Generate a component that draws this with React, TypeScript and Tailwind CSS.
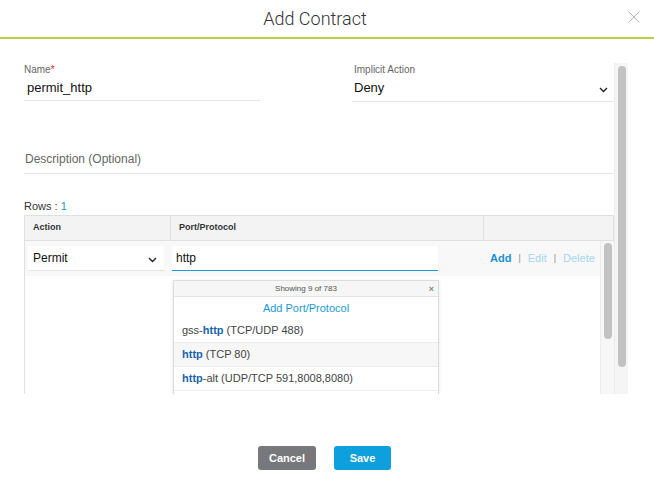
import React from "react";

const Chevron = ({ className = "" }: { className?: string }) => (
  <svg width="9" height="6" viewBox="0 0 9 6" className={className}>
    <polyline points="1,1 4.5,4.5 8,1" fill="none" stroke="#222" strokeWidth="1.4" />
  </svg>
);

export default function App() {
  return (
    <div
      className="w-[654px] h-[478px] bg-white overflow-hidden relative"
      style={{ fontFamily: '"Liberation Sans", Arial, sans-serif' }}
    >
      {/* header */}
      <div className="h-[37px] flex items-center justify-center relative pr-[24px]">
        <div className="text-[18px] font-light text-[#333]" style={{ fontFamily: "Roboto, sans-serif" }}>
          Add Contract
        </div>
        <svg className="absolute left-[628px] top-[11px]" width="12" height="12" viewBox="0 0 12 12">
          <path d="M0.5 0.5 L11.5 11.5 M11.5 0.5 L0.5 11.5" stroke="#b5b5b5" strokeWidth="1" />
        </svg>
      </div>
      <div className="h-[2px] bg-[#b9cf45]" />

      {/* body */}
      <div className="h-[355px] flex overflow-hidden">
        <div className="w-[590px] ml-[24px] pt-[25px] shrink-0">
          {/* row 1 */}
          <div className="flex">
            <div className="w-[236px]">
              <div className="text-[10px] leading-[12px] text-[#666]">
                Name<span className="text-[#e0262b]">*</span>
              </div>
              <div className="mt-[4px] pl-[3px] text-[13px] leading-[16px] text-[#111] pb-[4px] border-b border-[#e6e6e6]">
                permit_http
              </div>
            </div>
            <div className="ml-[92px] w-[262px]">
              <div className="text-[10px] leading-[12px] text-[#666] pl-[2px]">Implicit Action</div>
              <div className="mt-[4px] pl-[2px] pr-[6px] text-[13px] leading-[16px] text-[#111] pb-[5px] border-b border-[#e6e6e6] flex items-center justify-between">
                <span className="font-medium">Deny</span>
                <Chevron className="mt-[4px]" />
              </div>
            </div>
          </div>

          {/* description */}
          <div className="mt-[49px] text-[12px] leading-[16px] text-[#666] pb-[6px] border-b border-[#e6e6e6] pl-[1px]">
            Description (Optional)
          </div>

          {/* rows */}
          <div className="mt-[25px] text-[11px] leading-[14px] text-[#333]">
            Rows : <span className="text-[#1a9ad6]">1</span>
          </div>

          {/* table */}
          <div className="mt-[2px]">
            <div className="flex h-[26px] bg-[#f3f3f3] border border-[#e0e0e0] text-[9px] font-bold text-[#333]">
              <div className="w-[146px] border-r border-[#e0e0e0] flex items-center pl-[8px]">Action</div>
              <div className="w-[313px] border-r border-[#e0e0e0] flex items-center pl-[8px]">Port/Protocol</div>
              <div className="flex-1" />
            </div>
            <div className="flex h-[200px]">
              <div className="w-[576px] border-l border-[#e0e0e0] relative">
                <div className="h-[35px] bg-[#f8f8f8] flex items-start pt-[5px]">
                  <div className="ml-[3px] w-[136px] h-[25px] bg-white border-b border-[#e6e6e6] flex items-center justify-between pl-[5px] pr-[7px] text-[12px] text-[#111]">
                    <span>Permit</span>
                    <Chevron className="mt-[3px]" />
                  </div>
                  <div className="ml-[8px] w-[266px] h-[25px] bg-white border-b border-[#1d9ad6] flex items-center pl-[4px] text-[12px] text-[#111]">
                    http
                  </div>
                  <div className="ml-[52px] h-[25px] flex items-center text-[11px] gap-[7px]">
                    <span className="font-bold text-[#1a8fd0]">Add</span>
                    <span className="text-[#888] text-[9px]">|</span>
                    <span className="text-[#a6d7ef]">Edit</span>
                    <span className="text-[#888] text-[9px]">|</span>
                    <span className="text-[#a6d7ef]">Delete</span>
                  </div>
                </div>

                {/* dropdown */}
                <div className="absolute left-[148px] top-[39px] w-[266px] bg-white border border-[#dcdcdc] shadow-[0_1px_3px_rgba(0,0,0,0.12)]">
                  <div className="h-[16px] bg-[#f6f6f6] border-b border-[#e4e4e4] relative flex items-center justify-center text-[8px] text-[#555]">
                    Showing 9 of 783
                    <span className="absolute right-[4px] top-[2px] text-[9px] font-bold text-[#888]">×</span>
                  </div>
                  <div className="h-[22px] flex items-center justify-center text-[11px] text-[#1a9ad6]">
                    Add Port/Protocol
                  </div>
                  <div className="h-[24px] flex items-center pl-[8px] text-[11px] text-[#444] border-b border-[#ececec]">
                    gss-<span className="font-bold text-[#1763ad]">http</span>&nbsp;(TCP/UDP 488)
                  </div>
                  <div className="h-[24px] flex items-center pl-[8px] text-[11px] text-[#444] bg-[#f7f7f7] border-b border-[#ececec]">
                    <span className="font-bold text-[#1763ad]">http</span>&nbsp;(TCP 80)
                  </div>
                  <div className="h-[24px] flex items-center pl-[8px] text-[11px] text-[#444] border-b border-[#ececec]">
                    <span className="font-bold text-[#1763ad]">http</span>-alt (UDP/TCP 591,8008,8080)
                  </div>
                  <div className="h-[24px]" />
                </div>
              </div>
              <div className="w-[14px] bg-[#f7f7f7] border-l border-[#ececec] pt-[2px] flex justify-center">
                <div className="w-[8px] h-[96px] rounded-full bg-[#c2c2c2]" />
              </div>
            </div>
          </div>
        </div>

        {/* outer scrollbar */}
        <div className="w-[14px] mt-[24px] bg-[#f5f5f5] border-l border-[#ececec] pt-[3px] flex justify-center shrink-0">
          <div className="w-[8px] h-[301px] rounded-full bg-[#c2c2c2]" />
        </div>
      </div>

      {/* footer */}
      <div className="flex justify-center gap-[18px] mt-[52px] pr-[5px]">
        <div className="w-[58px] h-[24px] rounded-[3px] bg-[#77787b] text-white text-[11px] font-bold flex items-center justify-center">
          Cancel
        </div>
        <div className="w-[57px] h-[24px] rounded-[3px] bg-[#0ea0dc] text-white text-[11px] font-bold flex items-center justify-center">
          Save
        </div>
      </div>
    </div>
  );
}
